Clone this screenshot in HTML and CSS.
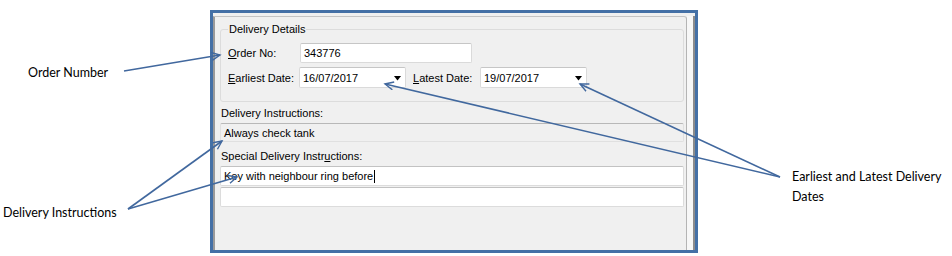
FILE: index.html
```html
<!DOCTYPE html>
<html lang="en">
<head>
    <meta charset="UTF-8">
    <meta name="viewport" content="width=device-width, initial-scale=1.0">
    <title>Delivery Details</title>
    <link rel="stylesheet" href="styles.css">
</head>
<body>
    <div class="page">
        <div class="window">
            <div class="panel">
                <fieldset class="group">
                    <legend>Delivery Details</legend>
                    <div class="row">
                        <label class="field-label"><u>O</u>rder No:</label>
                        <div class="input order-input">343776</div>
                    </div>
                    <div class="row">
                        <label class="field-label date-label"><u>E</u>arliest Date:</label>
                        <div class="input date-input">
                            <span>16/07/2017</span>
                            <svg class="drop" width="7" height="5" viewBox="0 0 7 5"><path d="M0 0 H7 L3.5 4.5 Z" fill="#000"/></svg>
                        </div>
                        <label class="field-label latest-label"><u>L</u>atest Date:</label>
                        <div class="input date-input">
                            <span>19/07/2017</span>
                            <svg class="drop" width="7" height="5" viewBox="0 0 7 5"><path d="M0 0 H7 L3.5 4.5 Z" fill="#000"/></svg>
                        </div>
                    </div>
                </fieldset>

                <div class="section-label">Delivery Instructions:</div>
                <div class="box readonly">Always check tank</div>

                <div class="section-label special">Special Delivery Instr<u>u</u>ctions:</div>
                <div class="box">Key with neighbour ring before<span class="caret"></span></div>
                <div class="box second"></div>
            </div>
            <div class="side"></div>
        </div>

        <!-- callouts -->
        <span class="note note-order">Order Number</span>
        <span class="note note-instr">Delivery Instructions</span>
        <span class="note note-dates">Earliest and Latest Delivery<br>Dates</span>

        <svg class="arrows" width="952" height="256" viewBox="0 0 952 256">
            <defs>
                <marker id="head" markerUnits="userSpaceOnUse" markerWidth="12" markerHeight="12" refX="9" refY="4.5" orient="auto">
                    <path d="M0.5 0.5 L9 4.5 L0.5 8.5" fill="none" stroke="#41689e" stroke-width="1.4"/>
                </marker>
            </defs>
            <g stroke="#41689e" stroke-width="1.6" fill="none" marker-end="url(#head)">
                <line x1="124" y1="71" x2="220" y2="55"/>
                <line x1="128" y1="209" x2="222" y2="141"/>
                <line x1="128" y1="209" x2="237" y2="177"/>
                <line x1="780" y1="177" x2="385" y2="84"/>
                <line x1="780" y1="177" x2="580" y2="84"/>
            </g>
        </svg>
    </div>
</body>
</html>
```

FILE: styles.css
```css
* {
    margin: 0;
    padding: 0;
    box-sizing: border-box;
}

body {
    background: #fff;
    font-family: "Liberation Sans", Arial, sans-serif;
    color: #000;
}

.page {
    position: relative;
    width: 952px;
    height: 256px;
    overflow: hidden;
    padding: 10px 0 0 210px;
}

.window {
    display: flex;
    width: 488px;
    height: 243px;
    border: 3px solid #4470a6;
    background: #f0f0f0;
    padding-top: 3px;
    font-size: 11px;
}

.panel {
    flex: 1;
    border-left: 2px solid #9a9a9a;
    border-top: 1px solid #c4c4c4;
    border-right: 1px solid #b4b4b4;
    border-top-right-radius: 3px;
    padding: 6px 2px 0 5px;
}

.side {
    width: 8px;
    border-right: 2px solid #8c8c8c;
    background: #f7f7f7;
}

.group {
    border: 1px solid #dcdcdc;
    border-radius: 3px;
    padding: 7px 0 13px 7px;
}

.group legend {
    padding: 0 1px;
    line-height: 13px;
}

.row {
    display: flex;
    align-items: center;
}

.row + .row {
    margin-top: 4px;
}

.field-label {
    width: 72px;
}

.date-label {
    width: 71px;
}

.latest-label {
    width: 67px;
    margin-left: 7px;
}

.input {
    height: 20px;
    background: #fff;
    border: 1px solid #dadada;
    border-top-color: #c6c6c6;
    border-radius: 2px;
    padding: 0 3px;
    display: flex;
    align-items: center;
}

.order-input {
    width: 172px;
}

.date-input {
    width: 107px;
    height: 21px;
    justify-content: space-between;
    padding-right: 4px;
}

.drop {
    margin-top: 1px;
}

.section-label {
    line-height: 13px;
    margin: 5px 0 3px 1px;
}

.section-label.special {
    margin-top: 8px;
}

.box {
    height: 20px;
    background: #fff;
    border: 1px solid #dcdcdc;
    border-top-color: #c2c2c2;
    border-radius: 2px;
    padding: 0 3px;
    display: flex;
    align-items: center;
}

.box.readonly {
    height: 19px;
    background: #f0f0f0;
    border-color: #e0e0e0;
    border-top-color: #b8b8b8;
}

.box.second {
    margin-top: 1px;
}

.caret {
    display: inline-block;
    width: 1px;
    height: 13px;
    background: #000;
    margin-left: 1px;
}

.note {
    position: absolute;
    font-family: Lato, "Open Sans", sans-serif;
    font-size: 12.5px;
    line-height: 20px;
    color: #000;
}

.note-order {
    left: 28px;
    top: 63px;
}

.note-instr {
    left: 3px;
    top: 203px;
}

.note-dates {
    left: 792px;
    top: 167px;
}

.arrows {
    position: absolute;
    left: 0;
    top: 0;
    pointer-events: none;
}
```
